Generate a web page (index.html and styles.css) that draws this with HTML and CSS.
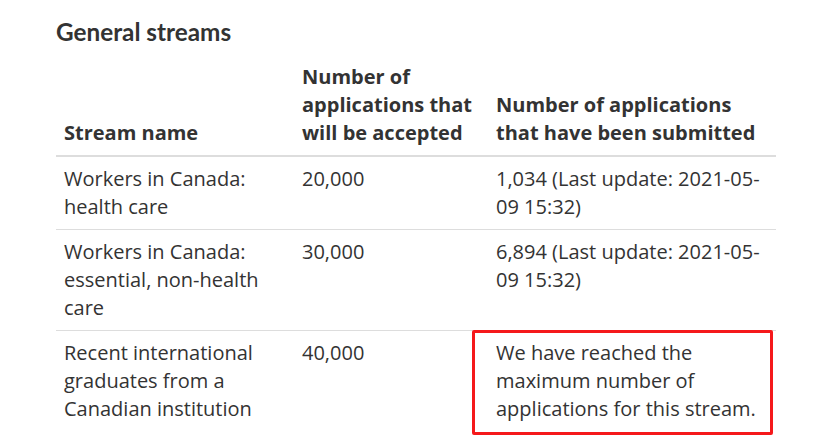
FILE: index.html
```html
<!DOCTYPE html>
<html lang="en">
<head>
<meta charset="utf-8">
<title>General streams</title>
<link rel="stylesheet" href="styles.css">
</head>
<body>
<main class="page">
  <h2 class="title">General streams</h2>
  <table class="streams">
    <thead>
      <tr>
        <th class="c1">Stream name</th>
        <th class="c2">Number of applications that will be accepted</th>
        <th class="c3">Number of applications that have been submitted</th>
      </tr>
    </thead>
    <tbody>
      <tr>
        <td>Workers in Canada: health care</td>
        <td>20,000</td>
        <td>1,034 (Last update: 2021-05-09 15:32)</td>
      </tr>
      <tr>
        <td>Workers in Canada: essential, non-health care</td>
        <td>30,000</td>
        <td>6,894 (Last update: 2021-05-09 15:32)</td>
      </tr>
      <tr>
        <td>Recent international graduates from a Canadian institution</td>
        <td>40,000</td>
        <td class="flagged">We have reached the maximum number of applications for this stream.<span class="mark"></span></td>
      </tr>
    </tbody>
  </table>
</main>
</body>
</html>
```
FILE: styles.css
```css
html, body {
  margin: 0;
  padding: 0;
  background: #fff;
}
.page {
  padding: 17px 0 10px 56px;
  width: 720px;
  min-height: 413px;
  font-family: "Open Sans", "Noto Sans", sans-serif;
  color: #333;
}
.title {
  font-family: Lato, "Noto Sans", sans-serif;
  font-weight: 700;
  font-size: 24.3px;
  line-height: 30px;
  margin: 0 0 8px 0;
  color: #333;
}
.streams {
  border-collapse: collapse;
  width: 720px;
  table-layout: fixed;
  font-size: 20px;
  line-height: 28px;
}
.streams th, .streams td {
  padding: 8px;
  text-align: left;
  vertical-align: top;
}
.streams th {
  vertical-align: bottom;
  font-weight: 700;
  border-bottom: 2px solid #ddd;
}
.streams tbody tr + tr td {
  border-top: 1px solid #ddd;
}
.c1 { width: 222px; }
.c2 { width: 178px; }
.c3 { width: 272px; }
.flagged {
  position: relative;
}
.mark {
  position: absolute;
  left: -16px;
  top: -1px;
  width: 295px;
  height: 99px;
  border: 3px solid #f5181b;
  border-radius: 2px;
}
```
